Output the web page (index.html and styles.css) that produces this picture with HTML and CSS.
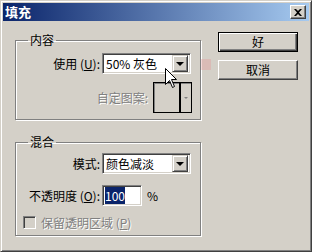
FILE: index.html
```html
<!DOCTYPE html>
<html>
  <head>
    <title>填充</title>
    <link rel="stylesheet" href="styles.css">
  </head>
  <body>
    <div class="window">
      <div class="titlebar">
        <span class="title">填充</span>
        <span class="close">
          <svg width="8" height="7" viewBox="0 0 8 7">
            <path d="M0 0 L2 0 L4 2 L6 0 L8 0 L5 3.5 L8 7 L6 7 L4 5 L2 7 L0 7 L3 3.5 Z" fill="#000"/>
          </svg>
        </span>
      </div>

      <div class="main">
        <div class="groups">
          <fieldset class="group">
            <legend>内容</legend>
            <div class="row">
              <span class="lbl">使用 (<u>U</u>):</span>
              <div class="select">
                <span class="value">50% 灰色</span>
                <span class="drop"><i class="tri"></i></span>
              </div>
            </div>
            <div class="row row-pattern">
              <span class="lbl-free disabled">自定图案:</span>
              <div class="pattern">
                <span class="swatch"></span>
                <span class="pattern-drop"><i class="tri tri-small"></i></span>
              </div>
            </div>
          </fieldset>

          <fieldset class="group group-blend">
            <legend>混合</legend>
            <div class="row">
              <span class="lbl">模式:</span>
              <div class="select">
                <span class="value">颜色减淡</span>
                <span class="drop"><i class="tri"></i></span>
              </div>
            </div>
            <div class="row row-opacity">
              <span class="lbl">不透明度 (<u>O</u>):</span>
              <div class="field"><span class="selected">100</span></div>
              <span class="unit">%</span>
            </div>
            <div class="row row-check">
              <span class="checkbox"></span>
              <span class="disabled">保留透明区域 (<u>P</u>)</span>
            </div>
          </fieldset>
        </div>

        <div class="buttons">
          <div class="btn btn-default"><span>好</span></div>
          <div class="btn"><span>取消</span></div>
        </div>
      </div>

      <span class="wm-icon"></span>

      <svg class="cursor" width="12" height="20" viewBox="0 0 12 20">
        <path d="M0.5 0.5 L0.5 16.5 L4.5 12.5 L7.5 19.5 L9.5 18.5 L6.5 11.5 L11.5 11.5 Z" fill="#fff" stroke="#000" stroke-width="1"/>
      </svg>
    </div>
  </body>
</html>
```

FILE: styles.css
```css
body {
  margin: 0;
  padding: 0;
  background-color: #d4d0c8;
  font-family: "Noto Sans CJK SC", "Liberation Sans", sans-serif;
  font-size: 12px;
  color: #000;
}

.window {
  position: relative;
  width: 312px;
  height: 252px;
  box-sizing: border-box;
  border: 1px solid;
  border-color: #d4d0c8 #404040 #404040 #d4d0c8;
  box-shadow: inset 1px 1px #fff, inset -1px -1px #808080;
  padding: 2px;
  background-color: #d4d0c8;
  overflow: hidden;
}

.titlebar {
  height: 18px;
  background: linear-gradient(to right, #0a246a, #a6caf0);
  display: flex;
  align-items: center;
  justify-content: space-between;
  padding: 0 3px 0 2px;
}

.title {
  color: #fff;
  font-weight: bold;
  font-size: 13px;
  line-height: 18px;
}

.close {
  width: 16px;
  height: 14px;
  box-sizing: border-box;
  background-color: #d4d0c8;
  border: 1px solid;
  border-color: #fff #404040 #404040 #fff;
  box-shadow: inset -1px -1px #808080;
  display: flex;
  align-items: center;
  justify-content: center;
}

.main {
  display: flex;
  padding: 12px 0 0 12px;
}

.groups {
  width: 186px;
}

.group {
  margin: 0;
  padding: 6px 0 6px 0;
  min-width: 0;
  border: 1px solid #808080;
  box-shadow: inset 1px 1px #fff, 1px 1px #fff;
}

.group legend {
  margin-left: 12px;
  padding: 0 2px;
  line-height: 14px;
}

.group-blend {
  margin-top: 15px;
  padding-top: 4px;
}

.row {
  display: flex;
  align-items: center;
}

.lbl {
  width: 84px;
  margin-right: 2px;
  text-align: right;
  white-space: nowrap;
}

.lbl-free {
  margin-right: 5px;
}

.disabled {
  color: #808080;
  text-shadow: 1px 1px #fff;
}

.select {
  width: 89px;
  height: 21px;
  box-sizing: border-box;
  border: 1px solid;
  border-color: #808080 #fff #fff #808080;
  box-shadow: inset 1px 1px #404040, inset -1px -1px #d4d0c8;
  background-color: #fff;
  display: flex;
  align-items: center;
  padding: 2px;
}

.value {
  flex: 1;
  padding-left: 1px;
  line-height: 15px;
  white-space: nowrap;
}

.drop {
  width: 16px;
  height: 17px;
  box-sizing: border-box;
  background-color: #d4d0c8;
  border: 1px solid;
  border-color: #d4d0c8 #404040 #404040 #d4d0c8;
  box-shadow: inset 1px 1px #fff, inset -1px -1px #808080;
  display: flex;
  align-items: center;
  justify-content: center;
}

.tri {
  width: 0;
  height: 0;
  border-left: 4px solid transparent;
  border-right: 4px solid transparent;
  border-top: 4px solid #000;
}

.tri-small {
  border-left-width: 2px;
  border-right-width: 2px;
  border-top: 2px solid #808080;
}

.row-pattern {
  justify-content: flex-end;
  padding-right: 8px;
  margin-top: 8px;
}

.pattern {
  width: 39px;
  height: 31px;
  box-sizing: border-box;
  border: 1px solid #000;
  box-shadow: inset 1px 1px #808080;
  display: flex;
}

.swatch {
  flex: 1;
  border-right: 2px solid #000;
}

.pattern-drop {
  width: 10px;
  display: flex;
  align-items: center;
  justify-content: center;
}

.row-opacity {
  margin-top: 11px;
}

.field {
  width: 40px;
  height: 21px;
  box-sizing: border-box;
  border: 1px solid;
  border-color: #808080 #fff #fff #808080;
  box-shadow: inset 1px 1px #404040, inset -1px -1px #d4d0c8;
  background-color: #fff;
  padding: 3px 2px;
  line-height: 13px;
}

.selected {
  background-color: #0a246a;
  color: #fff;
}

.unit {
  margin-left: 5px;
}

.row-check {
  margin-top: 10px;
  padding-left: 7px;
  height: 13px;
  line-height: 13px;
}

.checkbox {
  width: 13px;
  height: 13px;
  box-sizing: border-box;
  border: 1px solid;
  border-color: #808080 #fff #fff #808080;
  box-shadow: inset 1px 1px #404040, inset -1px -1px #d4d0c8;
  background-color: #d4d0c8;
  margin-right: 5px;
}

.buttons {
  width: 80px;
  margin-left: 17px;
  margin-top: -1px;
  display: flex;
  flex-direction: column;
  gap: 8px;
}

.btn {
  height: 20px;
  box-sizing: border-box;
  border: 1px solid;
  border-color: #fff #404040 #404040 #fff;
  box-shadow: inset -1px -1px #808080;
  display: flex;
  align-items: center;
  justify-content: center;
  line-height: 14px;
}

.btn-default {
  border: 1px solid #000;
  box-shadow: inset 1px 1px #fff, inset -1px -1px #404040, inset -2px -2px #808080;
}

.wm-icon {
  position: absolute;
  left: 200px;
  top: 58px;
  width: 10px;
  height: 11px;
  background-color: rgba(230, 150, 150, 0.35);
}

.cursor {
  position: absolute;
  left: 164px;
  top: 67px;
}
```
